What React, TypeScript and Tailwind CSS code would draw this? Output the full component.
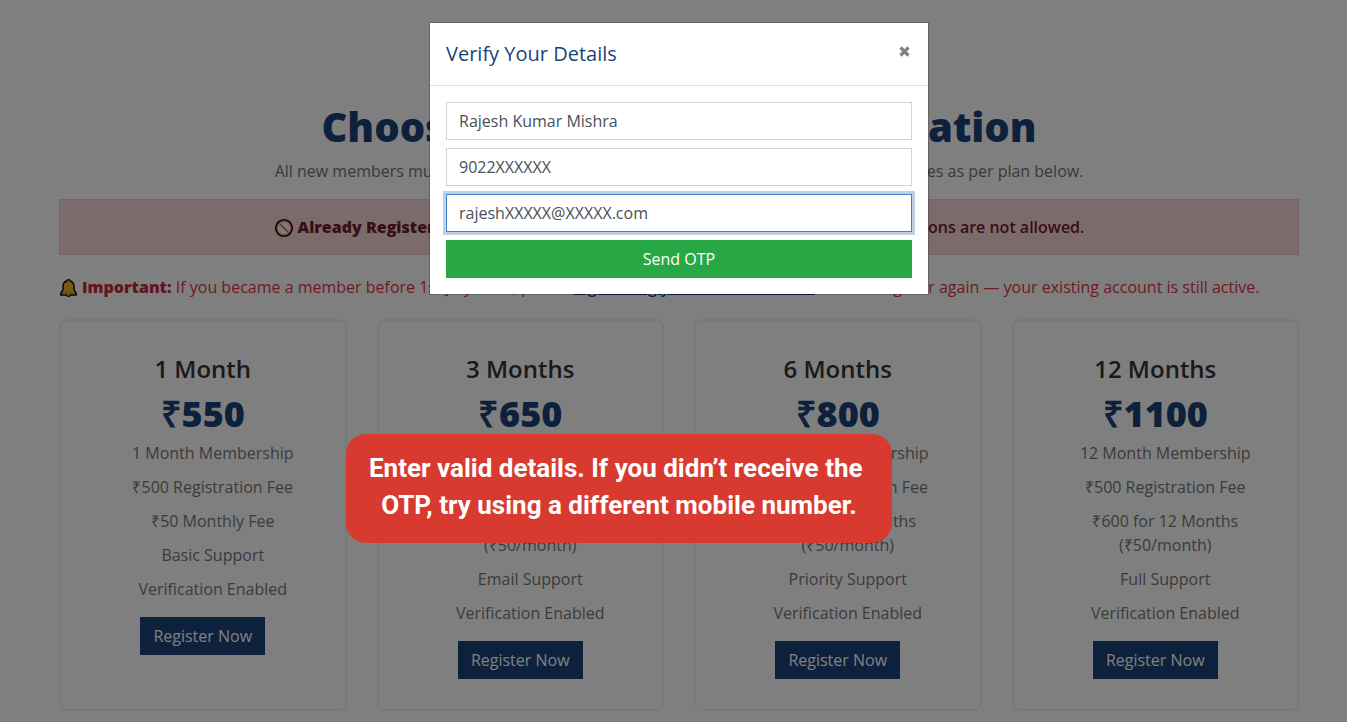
import React from "react";

interface Plan {
  title: string;
  price: string;
  features: string[];
}

const plans: Plan[] = [
  {
    title: "1 Month",
    price: "₹550",
    features: ["1 Month Membership", "₹500 Registration Fee", "₹50 Monthly Fee", "Basic Support", "Verification Enabled"],
  },
  {
    title: "3 Months",
    price: "₹650",
    features: ["3 Month Membership", "₹500 Registration Fee", "₹150 for 3 Months (₹50/month)", "Email Support", "Verification Enabled"],
  },
  {
    title: "6 Months",
    price: "₹800",
    features: ["6 Month Membership", "₹500 Registration Fee", "₹300 for 6 Months (₹50/month)", "Priority Support", "Verification Enabled"],
  },
  {
    title: "12 Months",
    price: "₹1100",
    features: ["12 Month Membership", "₹500 Registration Fee", "₹600 for 12 Months (₹50/month)", "Full Support", "Verification Enabled"],
  },
];

function ProhibitedIcon() {
  return (
    <svg viewBox="0 0 20 20" className="mr-1 inline-block size-5 align-[-5px]" aria-hidden="true">
      <circle cx="10" cy="10" r="9.1" fill="#0a0a0a" />
      <circle cx="10" cy="10" r="7.7" fill="#e8532f" />
      <circle cx="10" cy="10" r="6.600" fill="#f4f4f4" />
      <path d="M5.300 5.300l9.400 9.400" stroke="#e8532f" strokeWidth="1.400" />
    </svg>
  );
}

function BellIcon() {
  return (
    <svg viewBox="0 0 20 20" className="mr-1 inline-block h-5 w-[19px] align-[-5px]" aria-hidden="true">
      <path
        d="M10 1.2c-1 0-1.7.6-1.8 1.4C5.500 3.400 4.200 5.500 4.200 8.200v3.600L1.800 16v1.300h6c.2 1 1.100 1.500 2.200 1.500s2-.5 2.200-1.500h6V16l-2.400-4.200V8.200c0-2.700-1.300-4.800-4-5.600C11.700 1.800 11 1.200 10 1.200z"
        fill="#eeb22b"
        stroke="#0a0a0a"
        strokeWidth="1.500"
        strokeLinejoin="round"
      />
      <path d="M3.500 15.200h13" stroke="#c98612" strokeWidth="1" />
    </svg>
  );
}

function PlanCard({ plan }: { plan: Plan }) {
  return (
    <article className="flex flex-col items-center rounded-lg border-2 border-[#f1f1f1] px-8 pt-8 pb-[30px] text-center">
      <h2 className="mb-2 text-2xl leading-8 font-semibold text-[#343434]">{plan.title}</h2>
      <p className="text-4xl leading-[42px] font-extrabold text-[#1b4378]">{plan.price}</p>
      <ul className="mt-[6px] mb-4 flex w-full flex-col gap-[10px] pl-5 leading-6 text-[#777777]">
        {plan.features.map((feature) => (
          <li key={feature}>{feature}</li>
        ))}
      </ul>
      <button type="button" className="h-[38px] bg-[#1b4378] px-[13px] text-white">
        Register Now
      </button>
    </article>
  );
}

const inputClass =
  "block h-[38px] w-full border border-[#ced4da] bg-white px-3 text-base text-[#495057] outline-none";

function VerifyDialog() {
  return (
    <div role="dialog" aria-modal="true" aria-labelledby="dialog-title" className="w-[500px] border border-black/20 bg-white bg-clip-padding">
      <header className="flex items-start justify-between border-b border-[#dee2e6] p-4">
        <h2 id="dialog-title" className="text-xl leading-[30px] text-[#1b4378]">
          Verify Your Details
        </h2>
        <button type="button" aria-label="Close" className="pt-[7px] pr-[2px] text-[#808080]">
          <svg viewBox="0 0 11 11" className="size-[11px]" aria-hidden="true">
            <path d="M1.500 1.500l8 8M9.500 1.500l-8 8" stroke="currentColor" strokeWidth="3.200" />
          </svg>
        </button>
      </header>
      <form className="flex flex-col gap-2 p-4" onSubmit={(event) => event.preventDefault()}>
        <input type="text" aria-label="Full name" defaultValue="Rajesh Kumar Mishra" className={inputClass} />
        <input type="tel" aria-label="Mobile number" defaultValue="9022XXXXXX" className={inputClass} />
        <input
          type="text"
          aria-label="Email address"
          defaultValue="rajeshXXXXX@XXXXX.com"
          className="block h-[38px] w-full border border-[#3a80cf] bg-white px-3 text-base text-[#495057] ring-3 ring-[#c3d0de] outline-none"
        />
        <button type="submit" className="h-[38px] bg-[#28a745] text-white">
          Send OTP
        </button>
      </form>
    </div>
  );
}

export default function App() {
  return (
    <div className="relative min-h-screen bg-white font-['Open_Sans',sans-serif] text-base">
      <main className="pt-[103px] pr-12 pb-[11px] pl-[59px]">
        <header className="text-center">
          <h1 className="text-[40px] leading-[48px] font-extrabold text-[#1b4378]">Choose Your Plans for Registration</h1>
          <p className="mt-2 leading-6 text-[#6c757d]">
            All new members must pay a registration fee of ₹ 500 along with the membership charges as per plan below.
          </p>
        </header>
        <p className="mt-4 border border-[#f5c6cb] bg-[#f8d7da] py-[15px] text-center leading-6 font-semibold text-[#721c24]">
          <ProhibitedIcon />
          <strong className="font-extrabold">Already Registered?</strong> Please login to your account. Multiple or duplicate registrations are not allowed.
        </p>
        <p className="mt-5 leading-6 text-[#dc3545]">
          <BellIcon />
          <strong className="font-extrabold text-[#c8283a]">Important:</strong> If you became a member before 1st July 2025, please{" "}
          <a href="#login" className="font-semibold text-[#1b4378] underline">
            login using your old credentials
          </a>
          . Do not register again — your existing account is still active.
        </p>
        <section className="mt-5 grid grid-cols-4 gap-[30px]">
          {plans.map((plan) => (
            <PlanCard key={plan.title} plan={plan} />
          ))}
        </section>
      </main>

      <div className="absolute inset-0 flex items-start justify-center bg-black/50 pt-[22px] pl-[11px]">
        <VerifyDialog />
      </div>

      <div
        role="alert"
        className="absolute top-[434px] left-[346px] w-[546px] rounded-[20px] bg-[#d93a30] px-4 pt-4 pb-[19px] text-center font-['Roboto',sans-serif] text-[26px] leading-[37px] font-bold text-white"
      >
        Enter valid details. If you didn’t receive the&nbsp;
        <br />
        OTP, try using a different mobile number.
      </div>
    </div>
  );
}
